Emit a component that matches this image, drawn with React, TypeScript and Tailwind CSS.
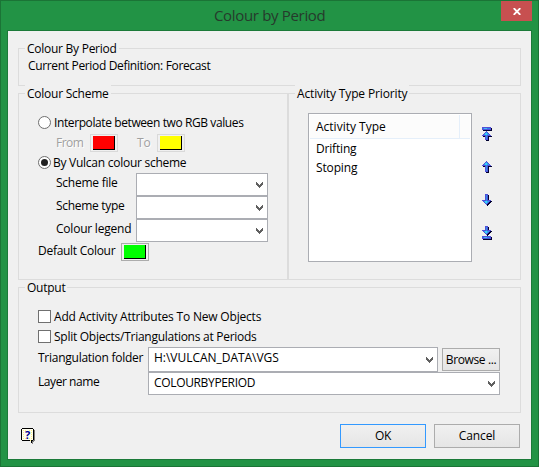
import type { ReactNode } from 'react';
import clsx from 'clsx';

function Group({ title, tracking, className, children }: { title: string; tracking: string; className?: string; children: ReactNode }) {
  return (
    <section className={clsx('border border-[#dcdcdc]', className)}>
      <h2 className={clsx('-mt-[9px] ml-[6px] w-fit bg-[#f0f0f0] px-[2px]', tracking)}>{title}</h2>
      {children}
    </section>
  );
}

function Chevron() {
  return (
    <svg width="7" height="6" viewBox="0 0 7 6" shapeRendering="crispEdges" className="shrink-0 fill-[#606060]">
      <path d="M0 0h1v1h1v1h1v1h1v-1h1v-1h1v-1h1v3h-1v1h-1v1h-1v1h-1v-1h-1v-1h-1v-1h-1z" />
    </svg>
  );
}

function Combo({ value, tall, className }: { value?: string; tall?: boolean; className: string }) {
  return (
    <div className={clsx('flex justify-between border border-[#abadb3] bg-white pr-[4px] pl-[5px]', className)}>
      <span className="mt-px">{value}</span>
      <div className={clsx('h-[6px]', tall ? 'mt-[9px]' : 'mt-[8px]')}>
        <Chevron />
      </div>
    </div>
  );
}

function Swatch({ color, border }: { color: string; border: string }) {
  return (
    <button className={clsx('flex h-[18px] w-[28px] shrink-0 items-start border pt-px pl-[2px]', border)}>
      <span className={clsx('h-[14px] w-[22px] border-r border-b border-black', color)} />
    </button>
  );
}

function Radio({ checked }: { checked?: boolean }) {
  return (
    <span className="mt-[2px] flex h-[13px] w-[13px] items-center justify-center rounded-full border border-[#6f6f6f] bg-white">
      {checked && <span className="h-[7px] w-[7px] rounded-full bg-[#212121]" />}
    </span>
  );
}

function Check({ label, className }: { label: string; className: string }) {
  return (
    <label className={clsx('flex gap-[3px] pl-[19px]', className)}>
      <span className="mt-[2px] h-[13px] w-[13px] border border-[#707070] bg-white" />
      {label}
    </label>
  );
}

function Arrow({ bar, down }: { bar?: boolean; down?: boolean }) {
  const arrow = bar
    ? 'M4 4h1v1h1v1h1v1h1v1h1v1h-3v4h-3v-4h-3v-1h1v-1h1v-1h1v-1h1z'
    : 'M4 0h1v1h1v1h1v1h1v1h1v1h-3v6h-3v-6h-3v-1h1v-1h1v-1h1v-1h1z';
  const height = bar ? 14 : 12;
  const flip = down ? `translate(0 ${height - 1}) scale(1 -1)` : undefined;
  return (
    <svg width="10" height={height} viewBox={`0 0 10 ${height}`} shapeRendering="crispEdges">
      <g transform="translate(1 1)" fill="#000030">
        <g transform={flip}>
          <path d={arrow} />
          {bar && <path d="M0 0h9v3h-9z" />}
        </g>
      </g>
      <g transform={flip}>
        <path d={arrow} fill="#5050d8" />
        <g transform={bar ? 'translate(0 4)' : undefined}>
          <path d="M4 1h1v1h1v1h1v1h-5v-1h1v-1h1z" fill="#30a0f0" />
          <path d="M3 2h2v2h-2z" fill="#38d0f8" />
          <path d={bar ? 'M4 4h1v4h-1z' : 'M4 4h1v6h-1z'} fill="#3090e8" />
        </g>
        {bar && (
          <>
            <path d="M0 0h9v3h-9z" fill="#5050d8" />
            <path d="M1 1h7v1h-7z" fill="#3080e8" />
            <path d="M2 1h3v1h-3z" fill="#40b8f8" />
          </>
        )}
      </g>
    </svg>
  );
}

function HelpIcon() {
  return (
    <svg width="14" height="16" viewBox="0 0 14 16" shapeRendering="crispEdges">
      <path d="M2 13h7v1h1v1h1v1h1v-2h1v-1h1v-11h-1v10h-11z" fill="#808080" />
      <path d="M1 0h11v1h1v11h-1v1h-1v2h-1v-1h-1v-1h-8v-1h-1v-11h1z" fill="#000" />
      <path d="M1 1h11v11h-2v2h-1v-2h-8z" fill="#fffff0" />
      <path
        d="M2 2h1v1h-1zM4 2h1v1h-1zM8 2h1v1h-1zM10 2h1v1h-1zM2 4h1v1h-1zM10 4h1v1h-1zM2 6h1v1h-1zM10 6h1v1h-1zM2 8h1v1h-1zM10 8h1v1h-1zM2 10h1v1h-1zM4 10h1v1h-1zM8 10h1v1h-1zM10 10h1v1h-1zM9 12h1v1h-1z"
        fill="#fff080"
      />
      <text x="6.7" y="10.5" textAnchor="middle" className="fill-[#000090] text-[11px] font-bold">?</text>
    </svg>
  );
}

const schemeRows = [
  { label: 'Scheme file', tracking: 'tracking-[-0.25px]' },
  { label: 'Scheme type', tracking: 'tracking-[-0.3px]' },
  { label: 'Colour legend', tracking: 'tracking-[-0.22px]' },
];

export default function App() {
  return (
    <div className="flex h-[467px] w-[539px] flex-col border border-[#1b7436] bg-[#229345] font-['Open_Sans',sans-serif] text-[12px] leading-[17px] whitespace-nowrap text-black">
      <header className="flex h-[29px] shrink-0">
        <h1 className="mt-[4px] ml-[213px] grow text-[15px] leading-[20px] tracking-[-0.33px] text-[#263a2c]">Colour by Period</h1>
        <button className="mr-[6px] flex h-[20px] w-[31px] items-center justify-center bg-[#c75050]">
          <svg width="8" height="7" viewBox="0 0 8 7" className="mt-px stroke-white stroke-[1.9]">
            <path d="M0.7 0.2L7.3 6.8M7.3 0.2L0.7 6.8" />
          </svg>
        </button>
      </header>

      <main className="mx-[6px] h-[430px] border border-[#1b7a39] bg-[#f0f0f0] pt-[17px] pr-[10px] pl-[10px]">
        <Group title="Colour By Period" tracking="tracking-[-0.26px]" className="h-[38px]">
          <p className="pl-[9px] tracking-[-0.34px]">Current Period Definition: Forecast</p>
        </Group>

        <div className="mt-[7px] flex">
          <Group title="Colour Scheme" tracking="tracking-[-0.24px]" className="h-[187px] w-[270px]">
            <label className="mt-[12px] flex gap-[3px] pl-[19px] tracking-[-0.4px]">
              <Radio />
              Interpolate between two RGB values
            </label>
            <div className="mt-[3px] flex h-[18px] pl-[37px] text-[#a0a0a0] [text-shadow:1px_1px_0_#fff]">
              <span className="w-[34px] tracking-[-0.5px]">From</span>
              <Swatch color="bg-[#ff0000]" border="border-[#d9d9d9]" />
              <span className="ml-[19px] w-[20px]">To</span>
              <Swatch color="bg-[#ffff00]" border="border-[#d9d9d9]" />
            </div>
            <label className="mt-[2px] flex gap-[2px] pl-[19px] tracking-[-0.26px]">
              <Radio checked />
              By Vulcan colour scheme
            </label>
            <div className="mt-[2px]">
              {schemeRows.map((row) => (
                <div key={row.label} className="flex h-[23px] pl-[37px]">
                  <span className={clsx('mt-px w-[80px]', row.tracking)}>{row.label}</span>
                  <Combo className="w-[132px]" />
                </div>
              ))}
            </div>
            <div className="mt-px flex pl-[19px]">
              <span className="-mt-px w-[83px] tracking-[-0.28px]">Default Colour</span>
              <Swatch color="bg-[#00ff00]" border="border-[#acacac]" />
            </div>
          </Group>

          <Group title="Activity Type Priority" tracking="tracking-[-0.14px]" className="h-[187px] w-[233px]">
            <div className="mt-[11px] flex gap-[10px] pl-[19px]">
              <div className="h-[149px] w-[164px] border border-[#abadb3] bg-white p-px">
                <div className="flex h-[24px] border-b border-[#e5effa] bg-[#fcfcfc]">
                  <span className="w-[150px] border-r border-[#e5effa] pt-[3px] pl-[6px]">Activity Type</span>
                </div>
                <p className="mt-px pl-[6px] tracking-[-0.18px]">Drifting</p>
                <p className="mt-[2px] pl-[6px] tracking-[-0.15px]">Stoping</p>
              </div>
              <div className="flex flex-col pt-[14px]">
                <Arrow bar />
                <div className="mt-[20px]">
                  <Arrow />
                </div>
                <div className="mt-[21px]">
                  <Arrow down />
                </div>
                <div className="mt-[20px]">
                  <Arrow bar down />
                </div>
              </div>
            </div>
          </Group>
        </div>

        <Group title="Output" tracking="tracking-[-0.25px]" className="mt-[7px] h-[126px]">
          <Check label="Add Activity Attributes To New Objects" className="mt-[12px] tracking-[-0.19px]" />
          <Check label="Split Objects/Triangulations at Periods" className="mt-[3px] tracking-[-0.27px]" />
          <div className="mt-[2px] flex h-[25px] pl-[19px]">
            <span className="mt-[2px] w-[110px] tracking-[-0.26px]">Triangulation folder</span>
            <Combo tall value="H:\VULCAN_DATA\VGS" className="w-[290px] tracking-[-0.03px]" />
            <button className="mt-px ml-[4px] h-[23px] w-[58px] border border-[#acacac] bg-linear-to-b from-[#f0f0f0] to-[#e5e5e5] tracking-[-0.38px]">
              Browse ...
            </button>
          </div>
          <div className="flex h-[23px] pl-[19px]">
            <span className="mt-px w-[110px] tracking-[-0.43px]">Layer name</span>
            <Combo value="COLOURBYPERIOD" className="w-[352px] tracking-[-0.34px]" />
          </div>
        </Group>

        <footer className="mt-[11px] flex pr-px">
          <div className="mt-[4px] ml-[3px] grow">
            <HelpIcon />
          </div>
          <button className="h-[24px] w-[86px] border border-[#3399ff] bg-linear-to-b from-[#f0f0f0] to-[#e5e5e5] pb-px tracking-[-0.25px]">OK</button>
          <button className="ml-[8px] h-[24px] w-[86px] border border-[#acacac] bg-linear-to-b from-[#f0f0f0] to-[#e5e5e5] pb-px tracking-[-0.1px]">
            Cancel
          </button>
        </footer>
      </main>
    </div>
  );
}
